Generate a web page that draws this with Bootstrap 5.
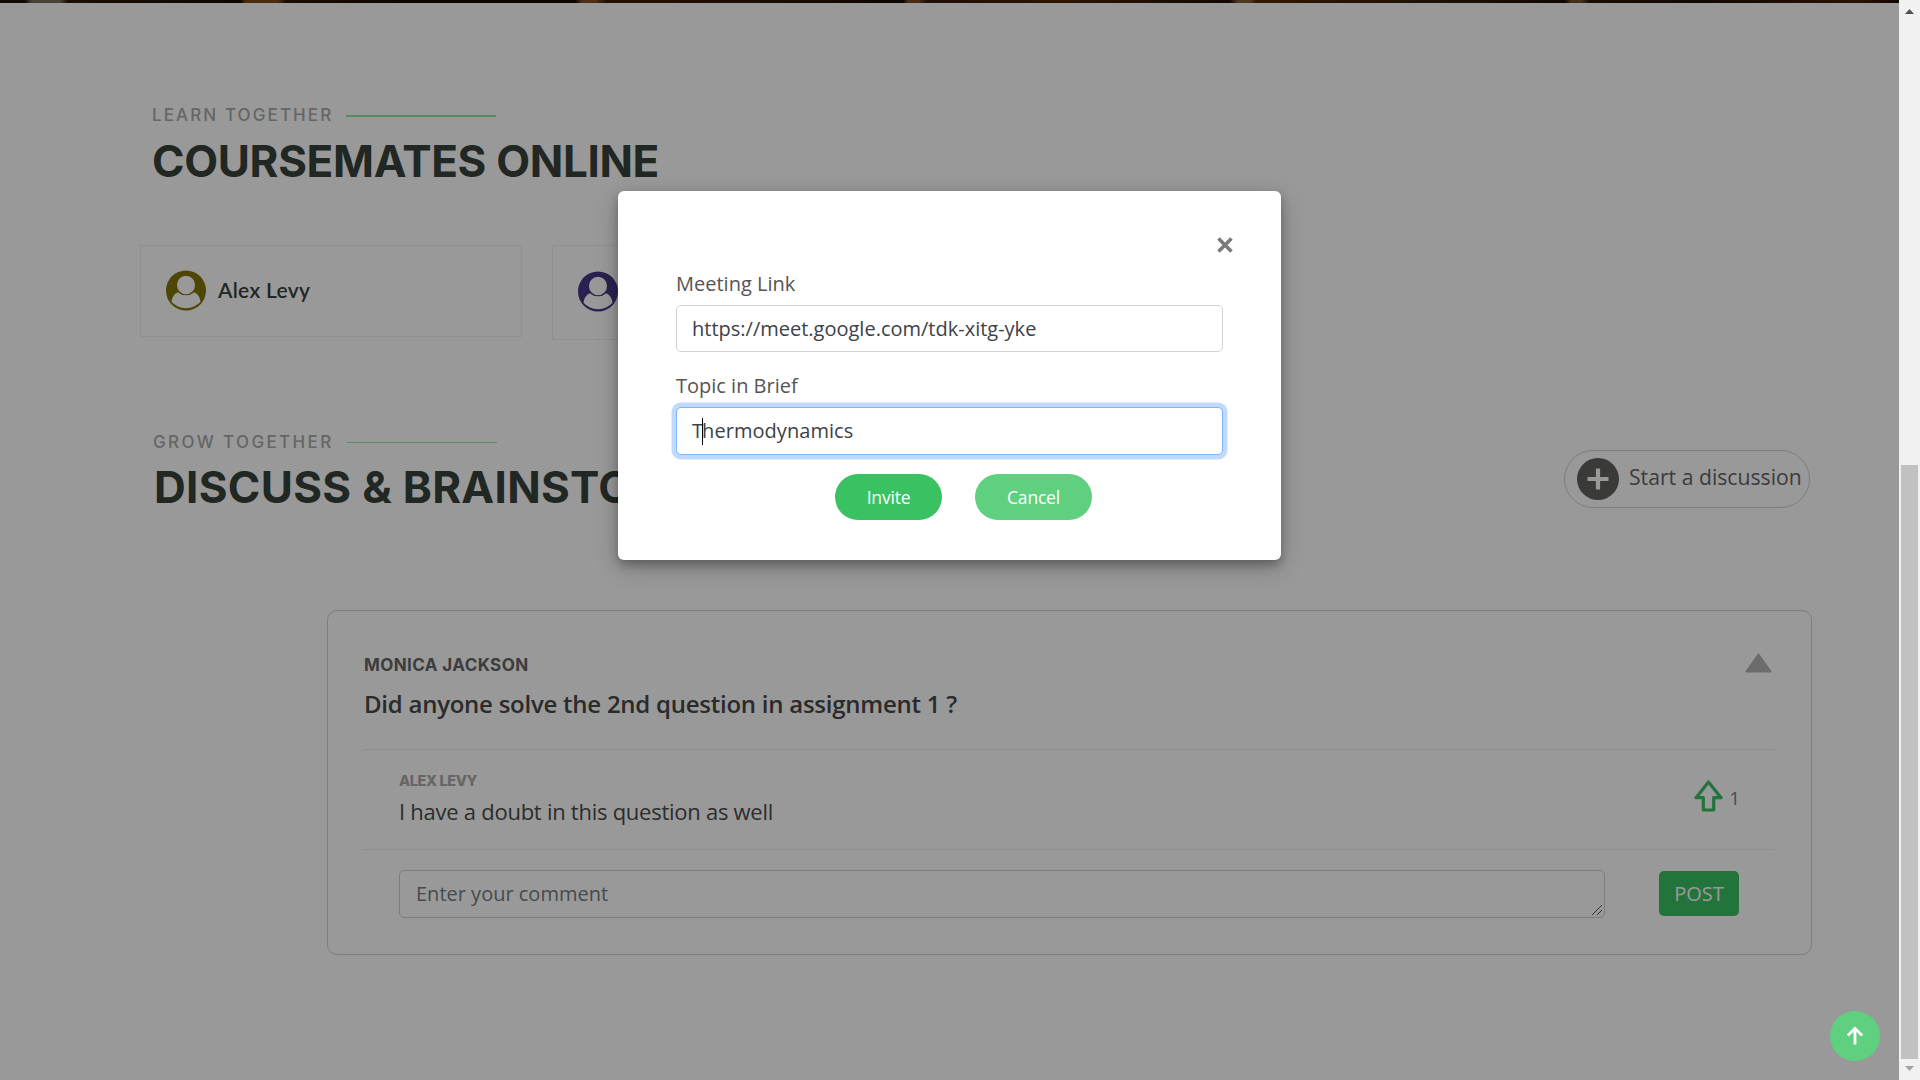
<!DOCTYPE html>
<html lang="en">
<head>
<meta charset="utf-8">
<title>Coursemates</title>
<link rel="stylesheet" href="https://cdn.jsdelivr.net/npm/bootstrap@5.3.0/dist/css/bootstrap.min.css">
<style>
html, body { height: 1080px; overflow: hidden; }
body { font-family: "Open Sans", "Noto Sans", sans-serif; color: #444; background: #fff; font-size: 20px; }
.screen { height: 1080px; }
.page-area { width: 1899px; height: 1080px; overflow: hidden; }
.photo-strip { height: 3px; background: linear-gradient(90deg, #1d1006 0 25px, #78705f 32px 60px, #2c1808 68px, #150b03 240px, #81491a 246px 278px, #2c1503 286px, #140900 420px, #150a02 575px, #82512b 582px 596px, #3c1c05 606px, #2b1202 800px, #140802 903px, #7d4a2a 908px 918px, #34180a 928px, #4d2505 1060px, #1e0d04 1230px, #85603a 1238px 1250px, #542a05 1256px, #38200a 1400px, #1c0c04 1565px, #75502e 1571px 1581px, #2c1507 1590px, #1e0e05 1700px, #461f08 1860px, #1c0b05); }
.sect-head { padding-left: 152px; }
.sect-head.first { padding-top: 100px; }
.eyebrow { font: 500 17px/24px Inter, sans-serif; letter-spacing: 2.1px; color: #aaa; height: 24px; }
.eyebrow.wide { letter-spacing: 2.37px; padding-left: 1px; }
.eyebrow i { width: 150px; height: 2px; margin: 2px 0 0 13px; background: #8fe8a9; }
.eyebrow.wide i { height: 1px; margin-top: 1px; }
.big-title { font: 700 44px/54px Inter, sans-serif; color: #37423b; margin: 7px 0 0; white-space: nowrap; }
.big-title.tight { letter-spacing: -.35px; }
.big-title.loose { letter-spacing: .3px; padding-left: 2px; margin-top: 6px; }
.mates { padding: 57px 0 0 140px; gap: 30px; height: 242px; }
.mate { width: 382px; height: 92px; border: 1px solid #eef0ef; padding: 0 0 2px 25px; gap: 12px; }
.mate.tall { height: 95px; }
.mate span { font: 600 21px/28px Lato, sans-serif; letter-spacing: .3px; color: #37423b; }
.start-btn { width: 246px; height: 58px; border: 1px solid #d2d2d2; border-radius: 29px; margin: 20px 89px 0 0; padding: 0 0 0 12px; gap: 10px; font-size: 21.2px; color: #666; white-space: nowrap; background: none; }
.thread { margin: 96px 87px 0 327px; height: 345px; border: 1px solid #d2d2d2; border-radius: 10px; padding: 0 36px 0 35px; }
.asker { font: 700 17px/24px Inter, sans-serif; letter-spacing: .4px; color: #666; }
.question { font-size: 24px; line-height: 34px; font-weight: 600; letter-spacing: -.25px; color: #484848; margin-top: 10px; }
.thread-top { height: 139px; border-bottom: 1px solid #eceeee; padding: 42px 3px 0 1px; }
.reply { height: 100px; border-bottom: 1px solid #eceeee; padding: 19px 35px 0 36px; }
.replier { font: 800 14.5px/24px Inter, sans-serif; letter-spacing: -.4px; color: #aaa; }
.reply-text { font-size: 22px; line-height: 32px; letter-spacing: -.26px; color: #4c4c4c; margin-top: 2px; }
.answer { padding: 20px 36px 0 36px; }
.answer textarea { width: 1206px; height: 48px; min-height: 48px; font-size: 20px; line-height: 30px; padding: 8px 16px; border-color: #d0d0d8; border-radius: 5px; overflow: hidden; resize: none; }
.answer textarea::placeholder { color: #757d84; }
.grip { position: absolute; right: 3px; bottom: 3px; }
.post-btn { width: 80px; height: 45px; margin-top: 1px; background: #3ac162; color: #fff; border: 0; border-radius: 5px; font-size: 20px; line-height: 45px; padding: 0; }
.votes { font-size: 19px; color: #7c838f; gap: 6px; padding-top: 11px; }
.modal.invite { position: absolute; background: rgba(0,0,0,.4); overflow: hidden; }
.invite .modal-dialog { max-width: 663px; margin: 191px auto 0; }
.invite .modal-content { height: 369px; border: 0; border-radius: 6px; box-shadow: 0 5px 10px rgba(0,0,0,.25), 0 7px 25px rgba(0,0,0,.22); padding: 42px 58px 0; }
.close-x { height: 24px; margin: 0 -10px 12px 0; }
.invite label { line-height: 30px; margin: 0 0 6px; color: #555; }
.invite .form-control { height: 47px; font-size: 20px; line-height: 30px; padding: 0 15px; color: #3c4248; border-color: #ced4da; border-radius: 5px; display: flex; align-items: center; margin-bottom: 19px; }
.invite .focused { border-color: #80b4ff; box-shadow: 0 0 0 4.5px #bfd9ff; height: 48px; letter-spacing: .05px; }
.caret { width: 1px; height: 27px; background: #000; margin: 0 -1px 0 -1px; }
.actions { gap: 33px; margin-left: 159px; }
.pill { width: 107px; height: 46px; border: 0; border-radius: 23px; background: #3ac162; color: #fff; font-size: 17.5px; line-height: 46px; padding: 0; letter-spacing: -.2px; }
.pill.pale { width: 117px; background: #5fcf80; }
.to-top { position: absolute; left: 1830px; top: 1011px; width: 50px; height: 50px; background: #5fcf80; z-index: 1060; }
.bar-track { width: 21px; background: #f1f1f1; }
.bar-thumb { width: 17px; height: 594px; background: #c1c1c1; }
</style>
<script src="https://cdn.jsdelivr.net/npm/bootstrap@5.3.0/dist/js/bootstrap.bundle.min.js"></script>
</head>
<body>
<svg width="0" height="0" class="position-absolute"><defs>
<g id="avatar"><circle cx="20" cy="20" r="20"/><path fill="#fff" d="M20 5.300a9 9 0 0 1 9 9.200a9 9.300 0 0 1-18 0a9 9 0 0 1 9-9.200zM11.800 21.700a12 11.500 0 0 0 16.400 0c3.800 1.500 5.800 5 6.300 9.500a18.500 17 0 0 1-29 0c.5-4.500 2.500-8 6.300-9.500z"/></g>
</defs></svg>
<div class="screen d-flex">
  <div class="page-area position-relative">
    <div class="photo-strip"></div>
    <main>
      <section>
        <div class="sect-head first">
          <div class="eyebrow d-flex align-items-center"><span>LEARN TOGETHER</span><i></i></div>
          <h2 class="big-title tight">COURSEMATES ONLINE</h2>
        </div>
        <div class="mates d-flex align-items-start">
          <div class="mate d-flex align-items-center"><svg width="40" height="41" viewBox="0 0 40 40" fill="#827708"><use href="#avatar"/></svg><span>Alex Levy</span></div>
          <div class="mate tall d-flex align-items-center"><svg width="40" height="41" viewBox="0 0 40 40" fill="#483785"><use href="#avatar"/></svg></div>
        </div>
      </section>
      <section>
        <div class="d-flex justify-content-between align-items-start">
          <div class="sect-head">
            <div class="eyebrow wide d-flex align-items-center"><span>GROW TOGETHER</span><i></i></div>
            <h2 class="big-title loose">DISCUSS &amp; BRAINSTORM</h2>
          </div>
          <button class="start-btn d-flex align-items-center">
            <svg width="42" height="42" viewBox="0 0 42 42"><circle cx="21" cy="21" r="21" fill="#62615f"/><path d="M21 10.500v21M10.500 21h21" stroke="#fff" stroke-width="4.200"/></svg>
            <span class="pb-1">Start a discussion</span>
          </button>
        </div>
        <article class="thread">
          <div class="thread-top d-flex justify-content-between">
            <div>
              <div class="asker"><span>MONICA JACKSON</span></div>
              <div class="question"><span>Did anyone solve the 2nd question in assignment 1 ?</span></div>
            </div>
            <svg width="27" height="20" viewBox="0 0 27 20"><path d="M13.500 1.500L25.500 18.500h-24z" fill="#b4b4b4" stroke="#b4b4b4" stroke-width="2" stroke-linejoin="round"/></svg>
          </div>
          <div class="reply d-flex justify-content-between">
            <div>
              <div class="replier"><span>ALEX LEVY</span></div>
              <div class="reply-text"><span>I have a doubt in this question as well</span></div>
            </div>
            <div class="votes d-flex align-items-start">
              <svg width="29" height="32" viewBox="0 0 29 32"><path d="M14.500 2L27 17.700h-7.300V30H9.300V17.700H2z" fill="none" stroke="#3ac162" stroke-width="3.200" stroke-linejoin="round"/></svg>
              <span class="pt-1">1</span>
            </div>
          </div>
          <div class="answer d-flex justify-content-between">
            <div class="position-relative">
              <textarea class="form-control" rows="1" placeholder="Enter your comment"></textarea>
              <svg class="grip" width="10" height="10" viewBox="0 0 10 10"><path d="M0 10L10 0M5 10l5-5" stroke="#555" stroke-width="1"/></svg>
            </div>
            <button class="btn post-btn">POST</button>
          </div>
        </article>
      </section>
    </main>
    <div class="modal invite d-block">
      <div class="modal-dialog">
        <div class="modal-content">
          <div class="close-x d-flex justify-content-end"><svg width="16" height="24" viewBox="0 0 16 24"><path d="M1.500 5.500l13 13M14.500 5.500l-13 13" stroke="#7a7a7a" stroke-width="3.600"/></svg></div>
          <label>Meeting Link</label>
          <div class="form-control"><span>https://meet.google.com/tdk-xitg-yke</span></div>
          <label>Topic in Brief</label>
          <div class="form-control focused">T<i class="caret"></i>hermodynamics</div>
          <div class="actions d-flex">
            <button class="btn pill">Invite</button>
            <button class="btn pill pale">Cancel</button>
          </div>
        </div>
      </div>
    </div>
    <a class="to-top rounded-circle d-flex align-items-center justify-content-center"><svg width="18" height="20" viewBox="0 0 18 20"><path d="M9 18.500V3M1.800 9.500L9 2.500l7.200 7" fill="none" stroke="#fff" stroke-width="2.800"/></svg></a>
  </div>
  <div class="bar-track d-flex flex-column align-items-center">
    <svg width="21" height="465" viewBox="0 0 21 465"><path d="M6 14l4.500-5L15 14z" fill="#505050"/></svg>
    <div class="bar-thumb"></div>
    <svg width="21" height="21" viewBox="0 0 21 21"><path d="M6 7l4.500 5L15 7z" fill="#a3a3a3"/></svg>
  </div>
</div>
</body>
</html>
